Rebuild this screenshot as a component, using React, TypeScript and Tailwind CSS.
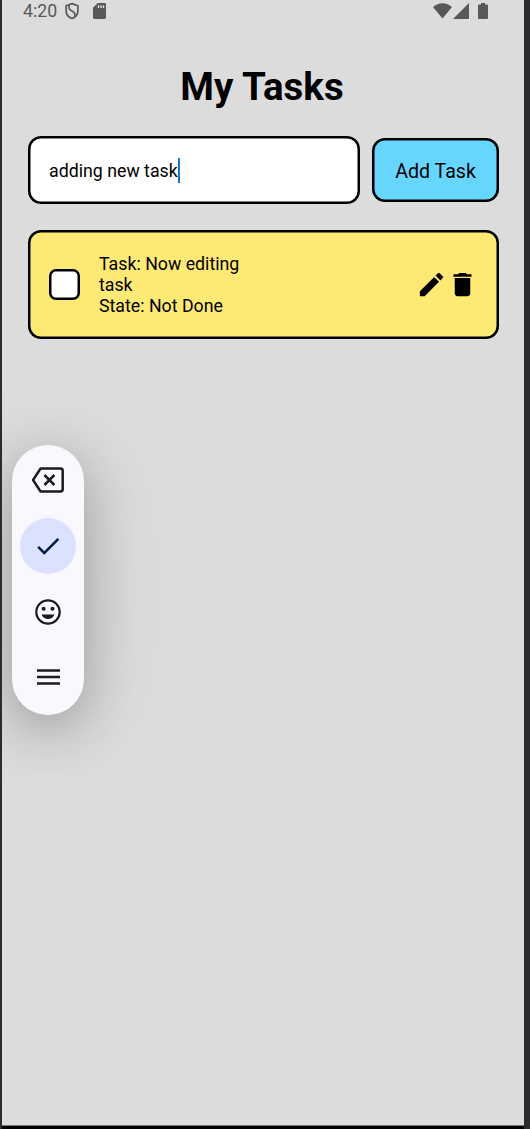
import type { ReactNode } from 'react';

function StatusBar() {
  return (
    <header className="flex h-[22px] shrink-0 items-center justify-between pr-[36px] pl-[21px] text-[#585858]">
      <div className="flex items-center">
        <span className="w-[42px] text-[17.8px] leading-[22px] whitespace-nowrap">4:20</span>
        <svg className="h-[18px] w-[14px]" viewBox="0 0 14 18" fill="none" stroke="currentColor" strokeWidth="1.7">
          <path d="M7 1.6 12.9 3.8V8.4C12.9 12 10.5 15.2 7 16.4 3.5 15.2 1.1 12 1.1 8.4V3.8Z" />
          <path d="M4 3.2V5.8Q4.2 7.4 6 8.4L8.6 10Q10.2 11.2 9.9 14" />
        </svg>
        <svg className="ml-[14px] h-[16px] w-[13px]" viewBox="0 0 13 16" fill="currentColor">
          <path fillRule="evenodd" d="M4.8 0H11.6Q13 0 13 1.4V14.6Q13 16 11.6 16H1.4Q0 16 0 14.6V4.8ZM4.8 2.2V5H6.2V2.2ZM7.3 2.2V5H8.7V2.2ZM9.8 2.2V5H11.2V2.2Z" />
        </svg>
      </div>
      <div className="flex items-center">
        <svg className="h-[16px] w-[19px]" viewBox="0 0 19 16" fill="currentColor">
          <path d="M0 4Q4 .2 9.5 .2T19 4L9.5 15.5Z" />
        </svg>
        <svg className="ml-[1px] h-[16px] w-[16px]" viewBox="0 0 16 16" fill="currentColor">
          <path d="M16 0V16H0Z" />
        </svg>
        <svg className="ml-[9px] h-[16px] w-[10px]" viewBox="0 0 10 16" fill="currentColor">
          <path d="M3 0H7V1.5H9Q10 1.5 10 2.5V15Q10 16 9 16H1Q0 16 0 15V2.5Q0 1.5 1 1.5H3Z" />
        </svg>
      </div>
    </header>
  );
}

function AddTaskForm() {
  return (
    <div className="mt-[25px] flex items-center justify-between">
      <div className="flex h-[68px] w-[332px] items-center rounded-[13px] bg-white pl-[21px] shadow-[inset_0_0_0_2.5px_#000]">
        <span className="pt-[2px] text-[17.75px] leading-[24px] whitespace-nowrap">adding new task</span>
        <span className="h-[25px] w-[2px] bg-[#1976b8]" />
      </div>
      <button className="h-[64px] w-[127px] rounded-[13px] bg-[#67d6ff] pt-[4px] text-[19.6px] whitespace-nowrap shadow-[inset_0_0_0_2.5px_#000]">
        Add Task
      </button>
    </div>
  );
}

function TaskCard() {
  return (
    <article className="mt-[25.5px] flex h-[109px] items-center rounded-[13px] bg-[#ffe975] px-[21.5px] shadow-[inset_0_0_0_2.5px_#000]">
      <span className="-ml-[0.5px] size-[31px] shrink-0 rounded-[7px] bg-white shadow-[inset_0_0_0_2.5px_#000]" />
      <div className="ml-[19px] w-[160px] pt-[3px] text-[17.75px] leading-[21px]">
        <p>Task: Now editing task</p>
        <p>State: Not Done</p>
      </div>
      <div className="ml-auto flex">
        <svg className="size-[31px]" viewBox="0 0 24 24" fill="#000">
          <path d="M3 17.25V21h3.75L17.81 9.94l-3.75-3.75L3 17.25zM20.71 7.04a.996.996 0 0 0 0-1.41l-2.34-2.34a.996.996 0 0 0-1.41 0l-1.83 1.83 3.75 3.75 1.83-1.83z" />
        </svg>
        <svg className="size-[31px]" viewBox="0 0 24 24" fill="#000">
          <path d="M6 19c0 1.1.9 2 2 2h8c1.1 0 2-.9 2-2V7H6v12zM19 4h-3.5l-1-1h-5l-1 1H5v2h14V4z" />
        </svg>
      </div>
    </article>
  );
}

function Key({ children, active = false }: { children: ReactNode; active?: boolean }) {
  return (
    <div className={active ? 'flex size-14 items-center justify-center rounded-full bg-[#dae2ff]' : 'flex size-14 items-center justify-center'}>
      {children}
    </div>
  );
}

function FloatingToolbar() {
  return (
    <nav className="absolute top-[445px] left-[10px] flex h-[270px] w-[72px] flex-col items-center gap-[9.6px] rounded-full bg-[#faf8ff] pt-[7.4px] text-[#1a1b21] shadow-[0_14px_50px_rgba(0,0,0,0.24),0_10px_100px_rgba(0,0,0,0.1)]">
      <Key>
        <svg className="h-[26px] w-[32px]" viewBox="0 0 32 26" fill="none" stroke="currentColor" strokeWidth="2.5">
          <path strokeLinejoin="round" d="M8.6 1.5H28.5Q30.7 1.5 30.7 3.7V22.3Q30.7 24.5 28.5 24.5H8.6L1 13Z" />
          <path d="M12.4 8 22.4 18M22.4 8 12.4 18" />
        </svg>
      </Key>
      <Key active>
        <svg className="size-[30px]" viewBox="0 0 24 24" fill="#001849">
          <path d="M9 16.17 4.83 12l-1.42 1.41L9 19 21 7l-1.41-1.41L9 16.17z" />
        </svg>
      </Key>
      <Key>
        <svg className="size-[26px]" viewBox="0 0 26 26" fill="currentColor">
          <circle cx="13" cy="13" r="11.7" fill="none" stroke="currentColor" strokeWidth="2.2" />
          <circle cx="8.6" cy="9.8" r="2" />
          <circle cx="17.5" cy="9.8" r="2" />
          <path d="M6.6 15.5H19.4C18.5 18.3 16 20.1 13 20.1S7.5 18.3 6.6 15.5Z" />
        </svg>
      </Key>
      <Key>
        <svg className="h-[16px] w-[23px]" viewBox="0 0 23 16" fill="none" stroke="currentColor" strokeWidth="2.3">
          <path d="M0 1.5H23M0 8H23M0 14.5H23" />
        </svg>
      </Key>
    </nav>
  );
}

export default function App() {
  return (
    <div className="h-[1129px] w-[530px] overflow-hidden bg-[#2b2c30] pr-[6px] pl-[2px] font-['Roboto',sans-serif] text-black">
      <div className="relative flex h-[1129px] flex-col overflow-hidden border-b-[3px] border-black bg-[#dcdcdc]">
        <StatusBar />
        <main className="flex flex-1 flex-col border-b border-[#777] pr-[25px] pl-[26px]">
          <h1 className="mt-[41px] pr-[3px] text-center text-[38.5px] leading-[48px] font-bold">My Tasks</h1>
          <AddTaskForm />
          <TaskCard />
        </main>
        <FloatingToolbar />
      </div>
    </div>
  );
}
